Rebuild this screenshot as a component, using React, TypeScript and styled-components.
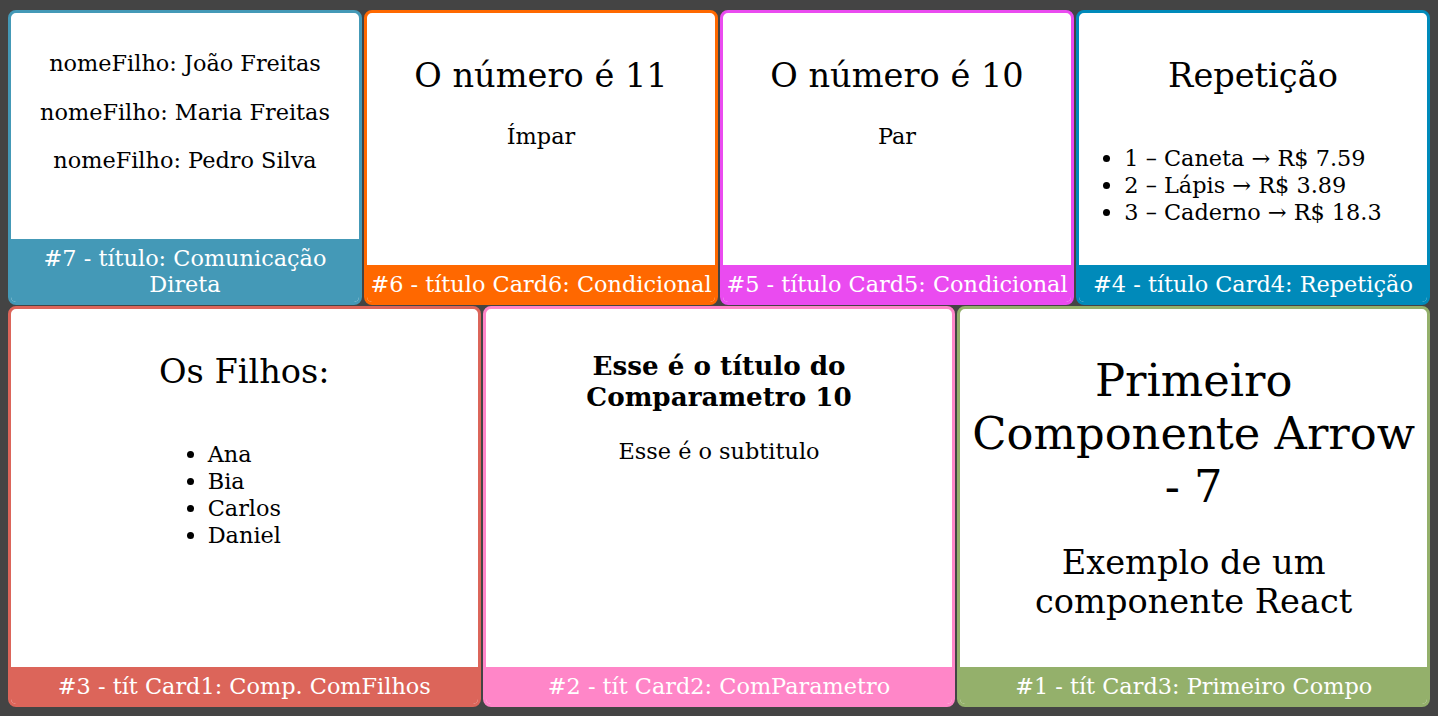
import React from 'react';
import styled, { createGlobalStyle } from 'styled-components';

const GlobalStyle = createGlobalStyle`
    html, body {
        margin: 0;
        padding: 0;
        background: #444444;
    }
    body {
        font-family: "DejaVu Serif", serif;
        font-size: 22.4px;
    }
`;

interface CardData {
    color: string;
    footer: string;
    content: React.ReactNode;
}

const Page = styled.div`
    display: flex;
    flex-direction: column;
    gap: 1px;
    padding: 10px 8px 9px;
    height: 716px;
    box-sizing: border-box;
`;

const Row = styled.div<{ $height: number }>`
    display: flex;
    gap: 2px;
    height: ${({ $height }) => $height}px;
`;

const CardBox = styled.div<{ $color: string }>`
    flex: 1 1 0;
    min-width: 0;
    display: flex;
    flex-direction: column;
    background: #ffffff;
    border: 3px solid ${({ $color }) => $color};
    border-radius: 8px;
    overflow: hidden;
`;

const CardBody = styled.div`
    flex: 1;
    padding: 15px 0 0;
    text-align: center;
    color: #000;
`;

const CardFooter = styled.div<{ $color: string }>`
    background: ${({ $color }) => $color};
    color: #ffffff;
    text-align: center;
    padding: 5.5px 0;
`;

const Title = styled.h2`
    font-size: 1.5em;
    font-weight: normal;
    margin: 0.83em 0;
`;

const BigTitle = styled.h1`
    font-size: 2em;
    font-weight: normal;
    margin: 0.67em 0;
`;

const BoldTitle = styled.h3`
    font-size: 1.17em;
    font-weight: bold;
    margin: 1em 0;
`;

const Text = styled.p`
    margin: 1em 0;
`;

const List = styled.ul`
    display: inline-block;
    text-align: left;
    margin: 1em 0;
    padding-left: 0;
    list-style: disc;
`;

const Item = styled.li`
    line-height: 27px;
`;

const Card = ({ color, footer, content }: CardData) => (
    <CardBox $color={color}>
        <CardBody>{content}</CardBody>
        <CardFooter $color={color}>{footer}</CardFooter>
    </CardBox>
);

const filhos = ['João Freitas', 'Maria Freitas', 'Pedro Silva'];
const produtos = [
    { id: 1, nome: 'Caneta', preco: 7.59 },
    { id: 2, nome: 'Lápis', preco: 3.89 },
    { id: 3, nome: 'Caderno', preco: 18.3 },
];

const topRow: CardData[] = [
    {
        color: '#4499b7',
        footer: '#7 - título: Comunicação Direta',
        content: filhos.map((nome) => <Text key={nome}>nomeFilho: {nome}</Text>),
    },
    {
        color: '#ff6800',
        footer: '#6 - título Card6: Condicional',
        content: (
            <>
                <Title>O número é 11</Title>
                <Text>Ímpar</Text>
            </>
        ),
    },
    {
        color: '#ea4bf0',
        footer: '#5 - título Card5: Condicional',
        content: (
            <>
                <Title>O número é 10</Title>
                <Text>Par</Text>
            </>
        ),
    },
    {
        color: '#008aba',
        footer: '#4 - título Card4: Repetição',
        content: (
            <>
                <Title>Repetição</Title>
                <List>
                    {produtos.map((p) => (
                        <Item key={p.id}>
                            {p.id} – {p.nome} → R$ {p.preco}
                        </Item>
                    ))}
                </List>
            </>
        ),
    },
];

const bottomRow: CardData[] = [
    {
        color: '#dc655a',
        footer: '#3 - tít Card1: Comp. ComFilhos',
        content: (
            <>
                <Title>Os Filhos:</Title>
                <List>
                    {['Ana', 'Bia', 'Carlos', 'Daniel'].map((n) => (
                        <Item key={n}>{n}</Item>
                    ))}
                </List>
            </>
        ),
    },
    {
        color: '#ff86c8',
        footer: '#2 - tít Card2: ComParametro',
        content: (
            <>
                <BoldTitle>Esse é o título do Comparametro 10</BoldTitle>
                <Text>Esse é o subtitulo</Text>
            </>
        ),
    },
    {
        color: '#94b06b',
        footer: '#1 - tít Card3: Primeiro Compo',
        content: (
            <>
                <BigTitle>Primeiro Componente Arrow - 7</BigTitle>
                <Title>Exemplo de um componente React</Title>
            </>
        ),
    },
];

export default function App() {
    return (
        <>
            <GlobalStyle />
            <Page>
                <Row $height={295}>
                    {topRow.map((c) => (
                        <Card key={c.footer} {...c} />
                    ))}
                </Row>
                <Row $height={401}>
                    {bottomRow.map((c) => (
                        <Card key={c.footer} {...c} />
                    ))}
                </Row>
            </Page>
        </>
    );
}
